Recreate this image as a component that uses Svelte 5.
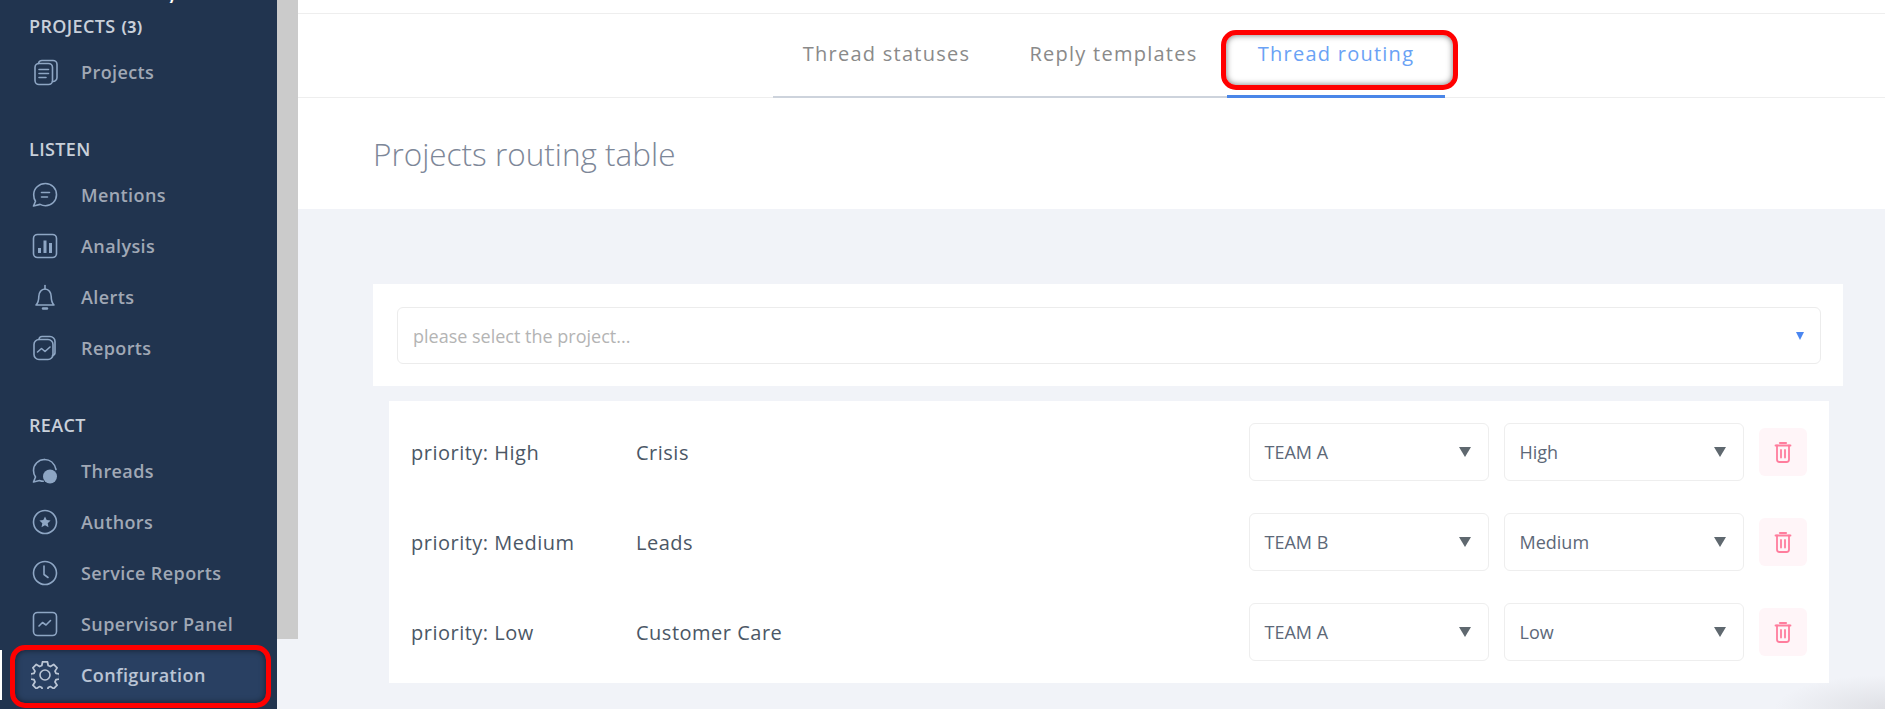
<script>
  const groups = [
    {
      title: 'PROJECTS',
      count: '(3)',
      items: [{ label: 'Projects', icon: 'projects' }]
    },
    {
      title: 'LISTEN',
      items: [
        { label: 'Mentions', icon: 'mentions' },
        { label: 'Analysis', icon: 'analysis' },
        { label: 'Alerts', icon: 'alerts' },
        { label: 'Reports', icon: 'reports' }
      ]
    },
    {
      title: 'REACT',
      items: [
        { label: 'Threads', icon: 'threads' },
        { label: 'Authors', icon: 'authors' },
        { label: 'Service Reports', icon: 'service' },
        { label: 'Supervisor Panel', icon: 'supervisor' },
        { label: 'Configuration', icon: 'config', active: true }
      ]
    }
  ];

  const tabs = ['Thread statuses', 'Reply templates', 'Thread routing'];

  const rows = [
    { tag: 'priority: High', name: 'Crisis', team: 'TEAM A', level: 'High' },
    { tag: 'priority: Medium', name: 'Leads', team: 'TEAM B', level: 'Medium' },
    { tag: 'priority: Low', name: 'Customer Care', team: 'TEAM A', level: 'Low' }
  ];
</script>

{#snippet navIcon(name)}
  <svg class="nav-icon" width="28" height="28" viewBox="0 0 28 28" fill="none" stroke="currentColor" stroke-width="1.6" stroke-linecap="round" stroke-linejoin="round">
    {#if name === 'projects'}
      <path d="M7.500 5.500A3.500 3.500 0 0 1 11 2.500h11a4 4 0 0 1 4 4v13a4 4 0 0 1-4.500 4" />
      <rect x="4" y="5.500" width="17.500" height="21" rx="4" />
      <path d="M8 11.500h9.500M8 15.500h9.500M8 19.500h7" />
    {:else if name === 'mentions'}
      <path d="M14.500 2.500c6.300 0 11 5 11 11.200s-4.800 11-11 11c-2 0-3.800-.5-5.400-1.300L2.500 25l2-4.700C3.300 18.500 2.700 16 2.700 13.700 2.700 7.500 8 2.500 14.500 2.500z" />
      <path d="M10.500 11.500h8M10.500 16h6" />
    {:else if name === 'analysis'}
      <rect x="2.500" y="2.500" width="23" height="23" rx="4" />
      <path d="M8.500 21v-5M14 21V8.500M19.500 21V11" stroke-width="3" stroke-linecap="butt" />
    {:else if name === 'alerts'}
      <path d="M5 22h18c-2-2-2.800-4.500-2.800-8.500 0-4-2.500-7.500-6.200-7.500S7.800 9.500 7.800 13.500c0 4-.8 6.500-2.800 8.500z" />
      <path d="M14 2.500V6" />
      <path d="M12 25.500h4" stroke-width="2.400" />
    {:else if name === 'reports'}
      <path d="M8 5.500a3 3 0 0 1 3-3h8a5 5 0 0 1 5 5v11a3 3 0 0 1-2.500 3" />
      <rect x="3" y="5.500" width="19" height="20" rx="5" />
      <path d="M6.500 18l4-3.500 3.500 3 5-4.500" />
    {:else if name === 'threads'}
      <path d="M13.500 2.500c-6 0-11 5-11 11 0 2.500.8 4.800 2 6.500l-2 5 6-1.500c1.200.5 2.500.8 3.800.8" />
      <path d="M13.500 2.500c5.500 0 10 3.800 11.500 10" />
      <circle cx="19" cy="19.500" r="7" fill="currentColor" stroke="none" />
    {:else if name === 'authors'}
      <circle cx="14" cy="14" r="11.500" />
      <path d="M14 8.500l1.700 3.600 3.900.5-2.900 2.700.8 3.900-3.500-2-3.500 2 .8-3.900-2.900-2.700 3.900-.5z" fill="currentColor" stroke="none" />
    {:else if name === 'service'}
      <circle cx="14" cy="14" r="11.500" />
      <path d="M13 7v8.500l4 3" />
    {:else if name === 'supervisor'}
      <rect x="2.500" y="2.500" width="23" height="23" rx="4" />
      <path d="M8 16l3.500-3.500 3.500 2.500 4.500-4.500" />
    {:else if name === 'config'}
      <path d="M11.800 2h4.400l.7 3.400 2 .9 3-1.900 3.100 3.100-1.900 3 .9 2 3.400.7v4.400l-3.400.7-.9 2 1.900 3-3.100 3.100-3-1.900-2 .9-.7 3.400h-4.400l-.7-3.400-2-.9-3 1.900-3.100-3.100 1.900-3-.9-2-3.400-.7v-4.400l3.400-.7.900-2-1.900-3 3.100-3.100 3 1.900 2-.9z" transform="translate(-1.400 -1.400) scale(1.100)" />
      <circle cx="14" cy="14" r="5" />
    {/if}
  </svg>
{/snippet}

<div class="page">
  <aside class="sidebar">
    <!-- tail of the heading scrolled off above the capture -->
    <div class="cut-off"><span>y</span></div>
    {#each groups as group}
      <section class="group">
        <h3 class="group-title">{group.title}{#if group.count}<small>{group.count}</small>{/if}</h3>
        {#each group.items as item}
          <a class="nav-item" class:active={item.active} href="#{item.icon}">
            {@render navIcon(item.icon)}
            <span>{item.label}</span>
            {#if item.active}<i class="callout"></i>{/if}
          </a>
        {/each}
      </section>
    {/each}
  </aside>

  <div class="gutter"></div>

  <main class="main">
    <div class="topbar"></div>
    <nav class="tabs">
      {#each tabs as tab, i}
        <a class="tab" class:current={i === 2} href="#tab{i}">
          {tab}
          {#if i === 2}<i class="callout"></i>{/if}
        </a>
      {/each}
    </nav>
    <header class="title-bar">
      <h1>Projects routing table</h1>
    </header>

    <div class="content">
      <div class="picker-card">
        <div class="picker">
          <span>please select the project...</span>
          <i class="picker-arrow"></i>
        </div>
      </div>

      <div class="routing-card">
        {#each rows as row}
          <div class="route">
            <span class="route-tag">{row.tag}</span>
            <span class="route-name">{row.name}</span>
            <div class="select">{row.team}<i class="select-arrow"></i></div>
            <div class="select">{row.level}<i class="select-arrow"></i></div>
            <button class="delete" type="button" aria-label="Delete">
              <svg width="18" height="24" viewBox="0 0 18 24" fill="none" stroke="currentColor" stroke-width="1.800" stroke-linecap="round" stroke-linejoin="round">
                <path d="M1.500 5.500h15" />
                <path d="M6 3h6" stroke-width="2.200" />
                <path d="M3 5.500v14a2.500 2.500 0 0 0 2.500 2.500h7a2.500 2.500 0 0 0 2.500-2.500v-14" />
                <path d="M7 10v7.500M11 10v7.500" />
              </svg>
            </button>
          </div>
        {/each}
      </div>
    </div>
  </main>
</div>

<style>
  :global(body) {
    margin: 0;
    font-family: "Open Sans", "Noto Sans", sans-serif;
  }

  .page {
    display: flex;
    height: 709px;
    overflow: hidden;
    background: #f1f3f8;
  }

  .sidebar {
    width: 277px;
    flex-shrink: 0;
    background: #21344f;
    padding-top: 9px;
    box-sizing: border-box;
  }

  .cut-off {
    height: 3px;
    margin-top: -9px;
    margin-bottom: 9px;
    padding-left: 167px;
    display: flex;
    align-items: flex-end;
    overflow: hidden;
    font-size: 18px;
    line-height: 1;
    font-weight: 600;
    color: #fff;
  }

  .group {
    margin-bottom: 37.500px;
  }

  .group-title {
    margin: 0 0 6.500px 29px;
    height: 28px;
    line-height: 28px;
    font-size: 18px;
    font-weight: 600;
    letter-spacing: 0.35px;
    color: #c9d0da;
  }

  .group-title small {
    margin-left: 6px;
    font-size: 16px;
    font-weight: 700;
  }

  .nav-item {
    position: relative;
    display: flex;
    align-items: center;
    gap: 22px;
    height: 51px;
    padding-left: 31px;
    color: #8ea6c4;
    text-decoration: none;
  }

  .nav-item span {
    font-size: 18px;
    font-weight: 600;
    letter-spacing: 0.4px;
    color: #a0a8b5;
  }

  .nav-item.active {
    color: #fff;
  }

  .nav-item.active span {
    color: #fff;
  }

  .nav-item.active::before {
    content: "";
    position: absolute;
    left: 0;
    top: 0;
    width: 2px;
    height: 50px;
    background: #fff;
  }

  .nav-icon {
    flex-shrink: 0;
  }

  .callout {
    position: absolute;
    border: 5px solid #f00;
    border-radius: 15px;
    box-shadow: inset 0 0 6px rgba(0, 0, 0, 0.55);
    box-sizing: border-box;
  }

  .nav-item .callout {
    left: 10px;
    right: 6px;
    top: -5px;
    bottom: -7px;
    background: rgba(58, 88, 135, 0.35);
  }

  .gutter {
    width: 21px;
    flex-shrink: 0;
    height: 639px;
    background: #cbcbcb;
  }

  .main {
    flex: 1;
    min-width: 0;
    display: flex;
    flex-direction: column;
  }

  .topbar {
    height: 13px;
    background: #fff;
    border-bottom: 1px solid #eee;
  }

  .tabs {
    height: 83px;
    flex-shrink: 0;
    display: flex;
    justify-content: center;
    background: #fff;
    border-bottom: 1px solid #eee;
    padding-left: 35px;
  }

  .tab {
    position: relative;
    width: 227px;
    height: 84px;
    box-sizing: border-box;
    text-align: center;
    line-height: 80px;
    font-size: 20px;
    letter-spacing: 1.25px;
    color: #8a8a8a;
    text-decoration: none;
    border-bottom: 2px solid #cdd3dc;
  }

  .tab.current {
    width: 218px;
    color: #6aa2f5;
    border-bottom: 3px solid #4a86e8;
  }

  .tab .callout {
    left: -6px;
    right: -13px;
    top: 16px;
    bottom: 5px;
  }

  .title-bar {
    height: 111px;
    flex-shrink: 0;
    background: #fff;
    padding-left: 75px;
    box-sizing: border-box;
  }

  .title-bar h1 {
    margin: 0;
    padding-top: 35px;
    font-size: 31.500px;
    line-height: 42px;
    font-weight: 300;
    color: #7d8798;
  }

  .content {
    flex: 1;
    display: flex;
    flex-direction: column;
    padding-top: 75px;
    background: radial-gradient(110px 34px at 100% 100%, #dfe0e5, transparent);
  }

  .picker-card {
    margin: 0 42px 0 75px;
    padding: 23px 22px 22px 24px;
    height: 102px;
    box-sizing: border-box;
    background: #fff;
  }

  .picker {
    display: flex;
    align-items: center;
    justify-content: space-between;
    height: 57px;
    box-sizing: border-box;
    padding: 0 16px 0 15px;
    border: 1px solid #ececec;
    border-radius: 6px;
    font-size: 18px;
    color: #b4b4b4;
  }

  .picker-arrow {
    width: 0;
    height: 0;
    border-left: 4.500px solid transparent;
    border-right: 4.500px solid transparent;
    border-top: 8px solid #4a86f0;
  }

  .routing-card {
    margin: 15px 56.500px 0 90.500px;
    height: 282px;
    box-sizing: border-box;
    padding: 22px 22px 0 22.500px;
    background: #fff;
    display: flex;
    flex-direction: column;
    gap: 32px;
  }

  .route {
    display: flex;
    align-items: center;
    height: 58px;
    font-size: 20px;
    letter-spacing: 0.5px;
    color: #4b5766;
  }

  .route-tag {
    width: 225px;
  }

  .route-name {
    flex: 1;
  }

  .select {
    position: relative;
    display: flex;
    align-items: center;
    width: 240.500px;
    height: 58px;
    box-sizing: border-box;
    margin-right: 14.500px;
    padding-left: 15px;
    border: 1.500px solid #eeeeee;
    border-radius: 6px;
    font-size: 18px;
    letter-spacing: 0;
    color: #5d6878;
  }

  .select-arrow {
    position: absolute;
    right: 17px;
    top: 23px;
    width: 0;
    height: 0;
    border-left: 6px solid transparent;
    border-right: 6px solid transparent;
    border-top: 10px solid #5f686f;
  }

  .delete {
    width: 48px;
    height: 48px;
    padding: 0;
    display: flex;
    align-items: center;
    justify-content: center;
    border: none;
    border-radius: 6px;
    background: #fff5f8;
    color: #ff7d9d;
  }
</style>
